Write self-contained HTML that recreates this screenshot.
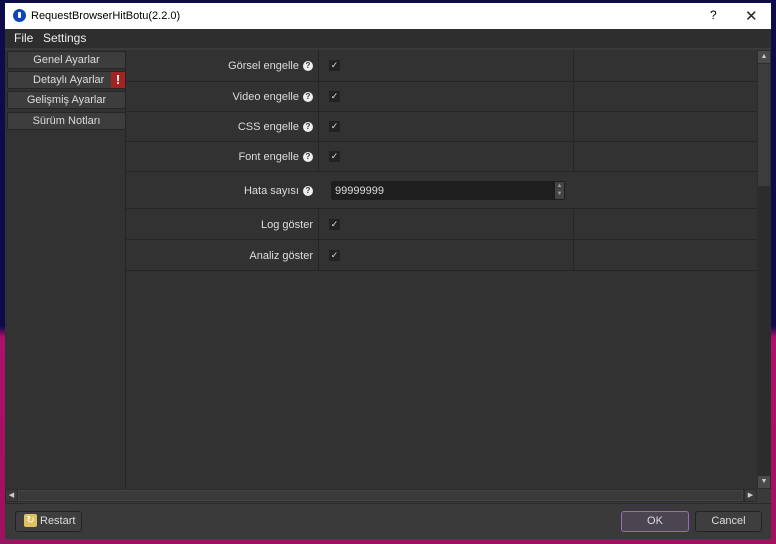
<!DOCTYPE html>
<html><head><meta charset="utf-8"><style>
*{margin:0;padding:0;box-sizing:border-box}
body{width:776px;height:544px;position:relative;overflow:hidden;font-family:"Liberation Sans",sans-serif;font-size:11px;background:linear-gradient(180deg,#0e0b4a 0%,#0e0b4a 60%,#b0106a 62%,#a0105e 100%)}
.abs{position:absolute}
#title{left:5px;top:3px;width:766px;height:26px;background:#fff;color:#000}
#win{left:5px;top:29px;width:766px;height:510px;background:#3a3a3a}
#menu{left:5px;top:29px;width:766px;height:19px;background:#2e2e2e;color:#eee;font-size:12px}
#nav{left:5px;top:50px;width:121px;height:439px;background:#323232;border-right:1px solid #262626}
.nb{position:absolute;left:2px;width:119px;height:18px;background:#3d3d3d;border:1px solid #262626;border-radius:2px;color:#ddd;text-align:center;line-height:16px;font-size:11px}
#content{left:126px;top:50px;width:631px;height:439px;background:#323232}
.row{position:absolute;left:0;width:631px;border-bottom:1px solid #262626}
.lab{position:absolute;right:444px;color:#ddd;font-size:11px}
.q{display:inline-block;width:10px;height:10px;border-radius:50%;background:#eee;color:#323232;font-size:8px;font-weight:bold;text-align:center;line-height:10px;margin-left:4px;vertical-align:1px}
.cb{position:absolute;left:203px;width:11px;height:11px;background:#222;color:#ddd;font-size:9px;line-height:11px;text-align:center}
.vl{position:absolute;top:0;width:1px;height:220px;background:#262626}
.btn{position:absolute;height:21px;border:1px solid #222;border-radius:3px;background:#3e3e3e;color:#ddd;font-size:11px;text-align:center;line-height:19px}
</style></head><body>
<div id="title" class="abs">
 <div class="abs" style="left:8px;top:6px;width:13px;height:13px;border-radius:50%;background:#1144bb"><div style="position:absolute;left:5px;top:3px;width:3px;height:6px;background:#fff;border-radius:1px"></div></div>
 <div class="abs" style="left:26px;top:7px;font-size:11px">RequestBrowserHitBotu(2.2.0)</div>
 <div class="abs" style="left:705px;top:5px;font-size:12px">?</div>
 <div class="abs" style="left:740px;top:4px;font-size:15px;font-weight:normal;color:#222">✕</div>
</div>
<div id="win" class="abs"></div>
<div id="menu" class="abs"><span class="abs" style="left:9px;top:2px">File</span><span class="abs" style="left:38px;top:2px">Settings</span></div>
<div id="nav" class="abs">
 <div class="nb" style="top:1px">Genel Ayarlar</div>
 <div class="nb" style="top:21px;text-align:left;padding-left:25px">Detaylı Ayarlar<span style="position:absolute;right:0;top:0;width:14px;height:16px;background:#a32222;color:#fff;font-weight:bold;font-size:13px;text-align:center">!</span></div>
 <div class="nb" style="top:41px">Gelişmiş Ayarlar</div>
 <div class="nb" style="top:62px">Sürüm Notları</div>
</div>
<div id="content" class="abs">
 <div class="vl" style="left:192px"></div><div class="vl" style="left:447px"></div>
 <div class="row" style="top:0;height:32px"><span class="lab" style="top:10px">Görsel engelle<span class="q">?</span></span><span class="cb" style="top:10px">✓</span></div>
 <div class="row" style="top:32px;height:30px"><span class="lab" style="top:9px">Video engelle<span class="q">?</span></span><span class="cb" style="top:9px">✓</span></div>
 <div class="row" style="top:62px;height:30px"><span class="lab" style="top:9px">CSS engelle<span class="q">?</span></span><span class="cb" style="top:9px">✓</span></div>
 <div class="row" style="top:92px;height:30px"><span class="lab" style="top:9px">Font engelle<span class="q">?</span></span><span class="cb" style="top:9px">✓</span></div>
 <div class="row" style="top:122px;height:37px;background:#323232"><span class="lab" style="top:13px">Hata sayısı<span class="q">?</span></span>
  <div class="abs" style="left:205px;top:9px;width:234px;height:19px;background:#1e1e1e;border-radius:2px;color:#ddd;padding:4px 0 0 4px">99999999<div class="abs" style="right:1px;top:1px;width:9px;height:17px;background:#444;color:#999;font-size:6px;line-height:8px;text-align:center">▲<br>▼</div></div></div>
 <div class="row" style="top:159px;height:31px"><span class="lab" style="top:10px">Log göster</span><span class="cb" style="top:10px">✓</span></div>
 <div class="row" style="top:190px;height:31px"><span class="lab" style="top:10px">Analiz göster</span><span class="cb" style="top:10px">✓</span></div>
</div>
<div class="abs" style="left:757px;top:50px;width:14px;height:439px;background:#2c2c2c">
 <div class="abs" style="left:1px;top:1px;width:12px;height:12px;background:#4a4a4a;color:#ccc;font-size:7px;text-align:center;line-height:12px">▲</div>
 <div class="abs" style="left:1px;top:14px;width:12px;height:122px;background:#3c3c3c"></div>
 <div class="abs" style="left:1px;top:426px;width:12px;height:12px;background:#4a4a4a;color:#ccc;font-size:7px;text-align:center;line-height:12px">▼</div>
</div>
<div class="abs" style="left:5px;top:489px;width:752px;height:13px;background:#2c2c2c">
 <div class="abs" style="left:1px;top:1px;width:11px;height:11px;background:#3a3a3a;color:#ccc;font-size:7px;line-height:11px;text-align:center">◀</div>
 <div class="abs" style="left:13px;top:1px;width:725px;height:11px;background:#3a3a3a;border:1px solid #444"></div>
 <div class="abs" style="left:740px;top:1px;width:11px;height:11px;background:#3a3a3a;color:#ccc;font-size:7px;line-height:11px;text-align:center">▶</div>
</div>
<div class="abs" style="left:5px;top:503px;width:766px;height:1px;background:#2a2a2a"></div>
<div class="btn" style="left:15px;top:511px;width:67px;text-align:left;padding-left:24px">
 <span class="abs" style="left:8px;top:2px;width:13px;height:13px;background:#e0c060;border-radius:2px;color:#fff;font-size:10px;line-height:13px;text-align:center">↻</span>Restart</div>
<div class="btn" style="left:621px;top:511px;width:68px;border-color:#9a6ac0;background:#4a4550">OK</div>
<div class="btn" style="left:695px;top:511px;width:67px">Cancel</div>
</body></html>
